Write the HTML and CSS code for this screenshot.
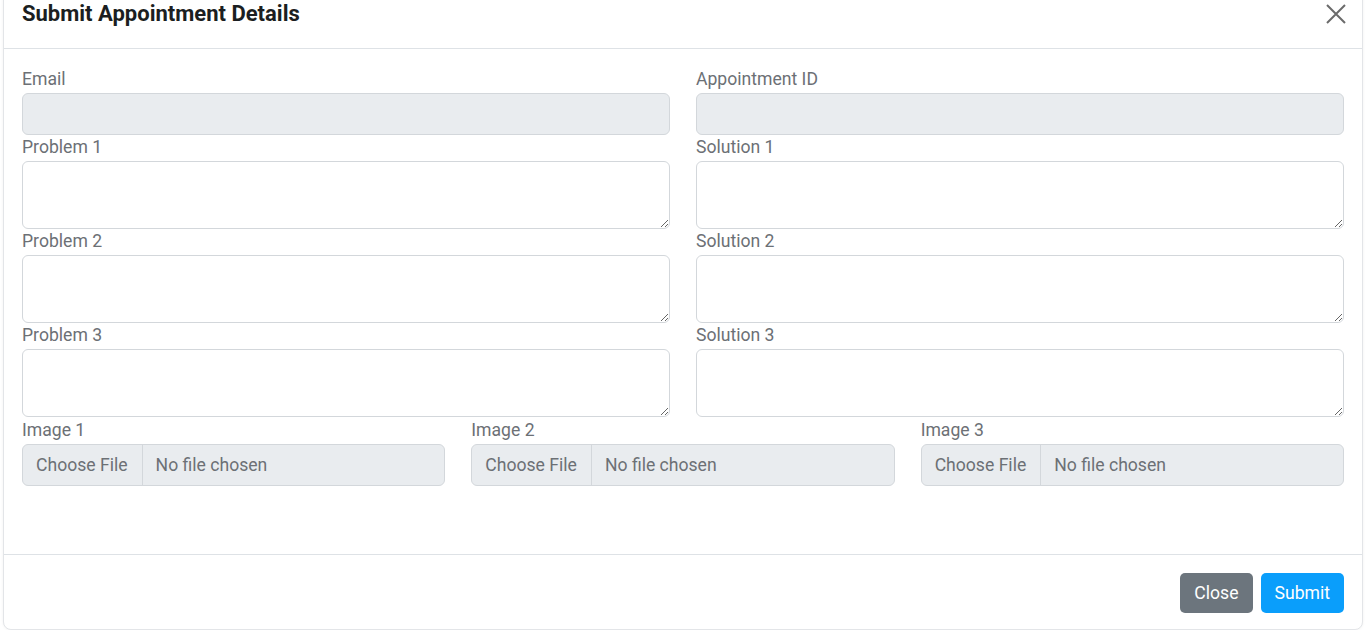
FILE: index.html
```html
<!DOCTYPE html>
<html lang="en">
<head>
<meta charset="utf-8">
<title>Submit Appointment Details</title>
<link rel="stylesheet" href="styles.css">
</head>
<body>
<div class="modal">
  <div class="modal-header">
    <h5 class="modal-title">Submit Appointment Details</h5>
    <button class="btn-close" type="button" aria-label="Close">
      <svg width="20" height="20" viewBox="0 0 20 20"><path d="M1 1L19 19M19 1L1 19" stroke="#6b6b6b" stroke-width="2" fill="none"/></svg>
    </button>
  </div>
  <div class="modal-body">
    <div class="grid-2">
      <div class="field">
        <label class="label">Email</label>
        <input class="form-control" type="text" disabled>
      </div>
      <div class="field">
        <label class="label">Appointment ID</label>
        <input class="form-control" type="text" disabled>
      </div>
      <div class="field">
        <label class="label">Problem 1</label>
        <textarea class="form-area"></textarea>
      </div>
      <div class="field">
        <label class="label">Solution 1</label>
        <textarea class="form-area"></textarea>
      </div>
      <div class="field">
        <label class="label">Problem 2</label>
        <textarea class="form-area"></textarea>
      </div>
      <div class="field">
        <label class="label">Solution 2</label>
        <textarea class="form-area"></textarea>
      </div>
      <div class="field">
        <label class="label">Problem 3</label>
        <textarea class="form-area"></textarea>
      </div>
      <div class="field">
        <label class="label">Solution 3</label>
        <textarea class="form-area"></textarea>
      </div>
    </div>
    <div class="grid-3">
      <div class="field">
        <label class="label">Image 1</label>
        <div class="file-input"><span class="file-btn">Choose File</span><span class="file-name">No file chosen</span></div>
      </div>
      <div class="field">
        <label class="label">Image 2</label>
        <div class="file-input"><span class="file-btn">Choose File</span><span class="file-name">No file chosen</span></div>
      </div>
      <div class="field">
        <label class="label">Image 3</label>
        <div class="file-input"><span class="file-btn">Choose File</span><span class="file-name">No file chosen</span></div>
      </div>
    </div>
  </div>
  <div class="modal-footer">
    <button class="btn btn-secondary" type="button">Close</button>
    <button class="btn btn-primary" type="button">Submit</button>
  </div>
</div>
</body>
</html>
```

FILE: styles.css
```css
html, body {
  margin: 0;
  padding: 0;
  background: #ffffff;
  font-family: Roboto, "Liberation Sans", Arial, sans-serif;
  overflow: hidden;
}

.modal {
  box-sizing: border-box;
  width: 1360px;
  margin: -16px 0 0 3px;
  background: #fff;
  border: 1px solid #e3e5e8;
  border-radius: 8px;
  box-shadow: 0 0 3px rgba(0, 0, 0, 0.06);
}

.modal-header {
  display: flex;
  align-items: center;
  justify-content: space-between;
  height: 64px;
  padding: 0 16px 0 18px;
  box-sizing: border-box;
  border-bottom: 1px solid #dee2e6;
}

.modal-title {
  margin: 0;
  padding-bottom: 6px;
  font-size: 22px;
  font-weight: 700;
  color: #1b1e21;
}

.btn-close {
  border: 0;
  background: transparent;
  padding: 0;
  margin-bottom: 6px;
  width: 20px;
  height: 20px;
  cursor: pointer;
}

.modal-body {
  padding: 18px 18px 68px 18px;
}

.grid-2 {
  display: grid;
  grid-template-columns: 1fr 1fr;
  column-gap: 26px;
}

.grid-3 {
  display: grid;
  grid-template-columns: 1fr 1fr 1fr;
  column-gap: 26px;
  margin-top: 1px;
}

.field {
  display: flex;
  flex-direction: column;
}

.label {
  font-size: 17.6px;
  line-height: 25px;
  color: #6c7075;
  margin-bottom: 1px;
}

.form-control {
  box-sizing: border-box;
  height: 42px;
  border: 1px solid #d3d7db;
  border-radius: 6px;
  background: #e9ecef;
  margin: 0;
}

.form-area {
  box-sizing: border-box;
  height: 68px;
  border: 1px solid #d3d7db;
  border-radius: 6px;
  background: #fff;
  resize: vertical;
  margin: 0;
  font-family: inherit;
}

.file-input {
  box-sizing: border-box;
  display: flex;
  height: 42px;
  border: 1px solid #d3d7db;
  border-radius: 6px;
  background: #e9ecef;
  font-size: 17.6px;
  color: #6c7075;
  overflow: hidden;
}

.file-btn {
  display: flex;
  align-items: center;
  padding: 0 14px 0 13px;
  border-right: 1px solid #d3d7db;
}

.file-name {
  display: flex;
  align-items: center;
  padding: 0 13px;
}

.modal-footer {
  display: flex;
  justify-content: flex-end;
  gap: 8px;
  padding: 18px 18px 16px;
  border-top: 1px solid #dee2e6;
}

.btn {
  height: 40px;
  border: 0;
  border-radius: 5px;
  padding: 0 14px;
  font-family: inherit;
  font-size: 17.6px;
  color: #fff;
  cursor: pointer;
}

.btn-secondary {
  background: #6c757d;
}

.btn-primary {
  background: #0a9efb;
}
```
